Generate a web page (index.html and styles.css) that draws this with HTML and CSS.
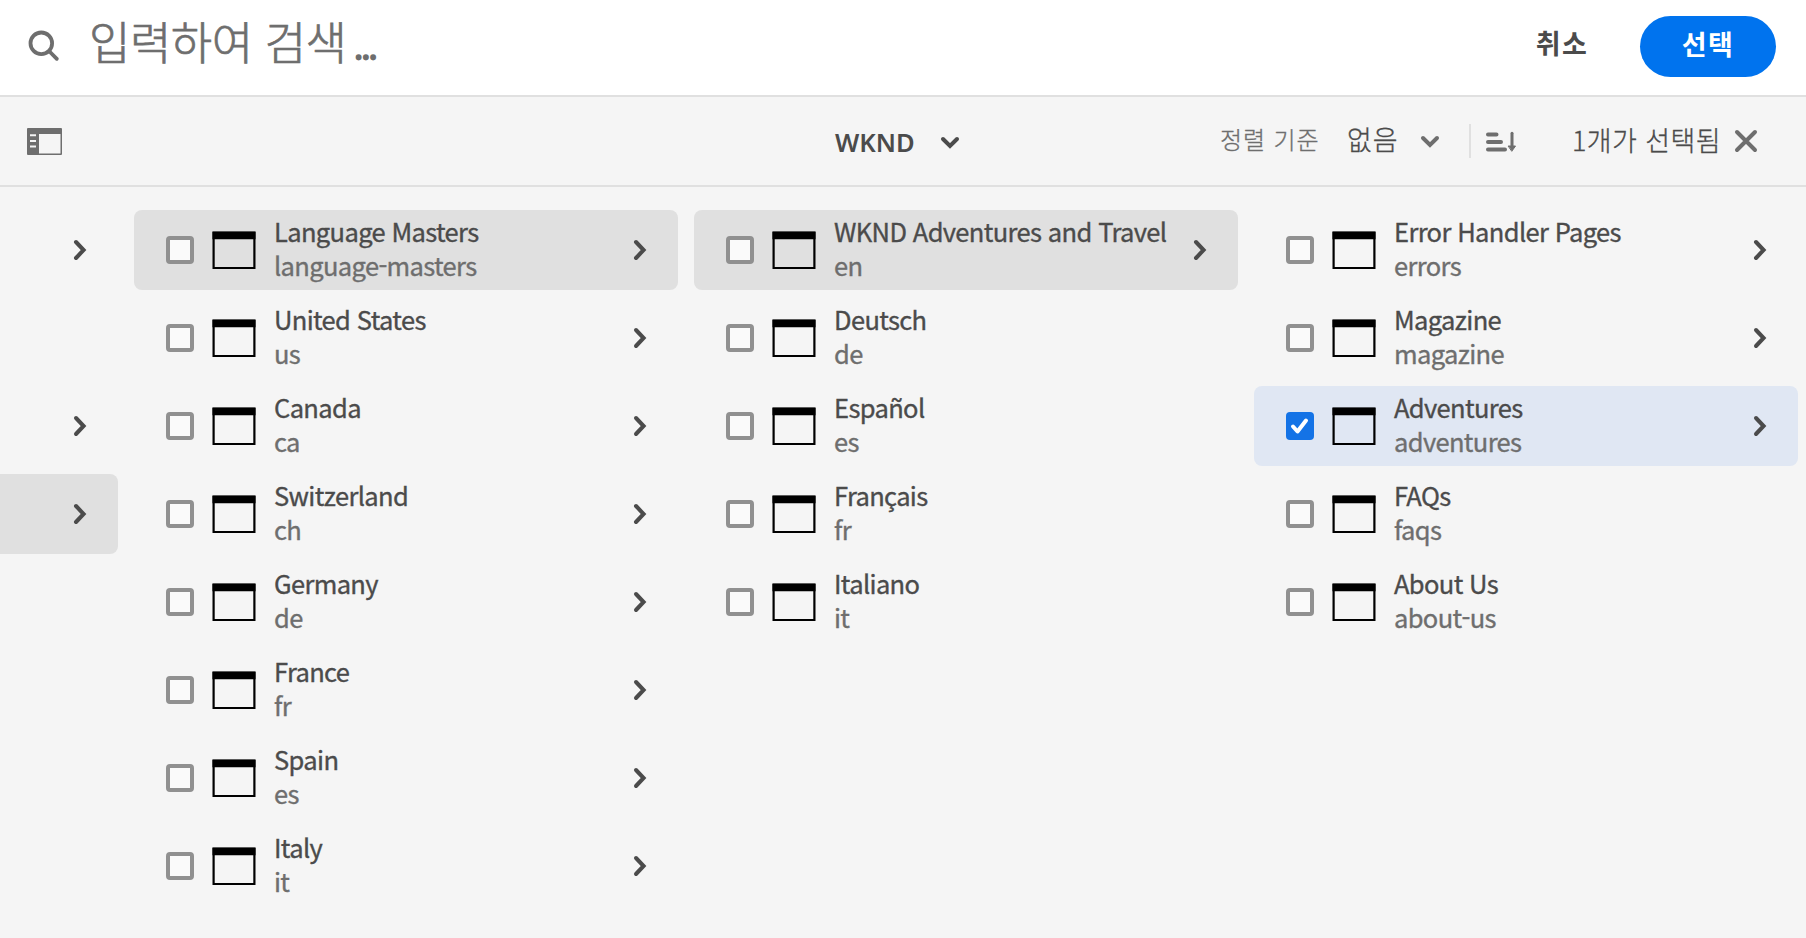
FILE: index.html
```html
<!DOCTYPE html>
<html lang="ko">
<head>
<meta charset="utf-8">
<title>WKND</title>
<link rel="stylesheet" href="styles.css">
</head>
<body>
<svg class="defs" width="0" height="0" aria-hidden="true">
  <symbol id="chev" viewBox="0 0 14 22"><path d="M3 3l7.600 8L3 19" fill="none" stroke="currentColor" stroke-width="4" stroke-linecap="round" stroke-linejoin="miter"/></symbol>
  <symbol id="page" viewBox="0 0 44 38"><path d="M1.600 1.800h40.800v35.200H1.600z" fill="none" stroke="#000" stroke-width="2.200"/><path d="M.5.500h43v7.700H.5z"/></symbol>
  <symbol id="down" viewBox="0 0 20 14"><path d="M3 3l7 7 7-7" fill="none" stroke="currentColor" stroke-width="4" stroke-linecap="round"/></symbol>
</svg>
<header class="search">
  <svg class="search-icon" viewBox="0 0 32 32"><circle cx="13.300" cy="13.300" r="10.800"/><path d="M21.500 21.500l7.300 7.300"/></svg>
  <span class="placeholder">입력하여 검색</span>
  <span class="dots">...</span>
  <button class="cancel">취소</button>
  <button class="select">선택</button>
</header>
<nav class="toolbar">
  <svg class="rail" viewBox="0 0 36 28"><path fill-rule="evenodd" d="M1 0h33q1 0 1 1v25q0 1-1 1H1q-1 0-1-1V1q0-1 1-1zM12 6v19.500h21.500V6zM3 6.200v2h6v-2zM3 12v2h6v-2zM3 17.500v2h6v-2z"/></svg>
  <div class="crumb"><span class="wknd">WKND</span><svg class="down dark"><use href="#down"/></svg></div>
  <span class="sort-label">정렬 기준</span>
  <span class="sort-value">없음</span>
  <svg class="down"><use href="#down"/></svg>
  <i class="divider"></i>
  <svg class="sort" viewBox="0 0 32 22"><path d="M2 3.500h8.500M2 11h13M2 18.500h17" stroke-width="4"/><path d="M26 2.200v14" stroke-width="3"/><path class="tip" d="M22.500 15h7L26 20z"/></svg>
  <span class="count">1개가 선택됨</span>
  <svg class="close" viewBox="0 0 24 24"><path d="M3 3l18 18M21 3L3 21"/></svg>
</nav>
<main class="columns" id="columns"></main>
<script src="app.js"></script>
</body>
</html>
```
FILE: styles.css
```css
* { box-sizing: border-box; }
body { margin: 0; width: 1806px; height: 938px; overflow: hidden; background: #f5f5f5; color: #4b4b4b; font-family: "Noto Sans CJK KR", "Noto Sans", sans-serif; }
svg { display: block; flex: none; overflow: visible; }
.defs { position: absolute; }
span, button { white-space: nowrap; }
.search { height: 97px; background: #fff; border-bottom: 2px solid #e0e0e0; display: flex; align-items: flex-start; padding: 0 30px 0 28px; color: #6e6e6e; }
.search-icon { width: 32px; height: 32px; margin-top: 30px; fill: none; stroke: #6e6e6e; stroke-width: 3.800; stroke-linecap: round; }
.placeholder { margin-left: 29px; width: 260px; font-size: 45px; font-weight: 300; letter-spacing: -.5px; line-height: 60px; margin-top: 11px; -webkit-text-stroke: .7px; }
.dots { font-size: 33px; line-height: 40px; margin: 26px 0 0 5px; letter-spacing: -1.900px; -webkit-text-stroke: 1.500px; }
button { border: 0; background: none; font-family: inherit; font-size: 27px; font-weight: 700; padding: 0; letter-spacing: 1.400px; }
.cancel { margin-left: auto; width: 54px; height: 60px; margin-top: 13px; line-height: 60px; color: #4b4b4b; }
.select { width: 136px; height: 61px; margin: 16px 0 0 51px; padding-bottom: 7px; border-radius: 31px; background: #0073ee; color: #fff; }
.toolbar { height: 90px; border-bottom: 2px solid #e0e0e0; display: flex; align-items: center; padding: 0 48px 0 27px; color: #6e6e6e; }
.rail { width: 36px; height: 28px; margin-top: 2px; fill: #6e6e6e; }
.crumb { display: flex; align-items: center; margin-left: 772px; color: #4b4b4b; gap: 25px; }
.wknd { width: 80px; font-family: "Noto Sans", sans-serif; font-size: 25.500px; font-weight: 600; line-height: 36px; padding-top: 2px; }
.down { width: 20px; height: 14px; }
.crumb .down { margin-top: 3px; }
.sort-label { margin-left: auto; width: 101px; font-size: 24px; font-weight: 300; letter-spacing: .9px; line-height: 36px; padding-bottom: 4px; -webkit-text-stroke: .3px; }
.sort-value { margin: 0 19px 0 26px; width: 54px; font-size: 27px; font-weight: 300; letter-spacing: 1px; line-height: 36px; padding-bottom: 4px; color: #4b4b4b; -webkit-text-stroke: .3px; }
.sort-value + .down { margin-top: 1px; }
.divider { width: 2px; height: 34px; background: #e0e0e0; margin: 0 15px 0 29px; }
.sort { width: 32px; height: 22px; margin-top: 2px; fill: none; stroke: #6e6e6e; }
.sort path { stroke-linecap: round; }
.sort .tip { fill: #6e6e6e; stroke-width: 1; }
.count { margin-left: 54px; width: 150px; font-size: 27px; font-weight: 300; letter-spacing: .4px; line-height: 36px; padding-bottom: 2px; color: #4b4b4b; -webkit-text-stroke: .3px; }
.close { width: 24px; height: 24px; margin-left: 12px; fill: none; stroke: #6e6e6e; stroke-width: 4; stroke-linecap: round; }
.columns { display: grid; grid-template-columns: 118px 544px 544px 544px; column-gap: 16px; padding-top: 23px; }
.column { display: flex; flex-direction: column; gap: 8px; }
.row { height: 80px; border-radius: 8px; display: flex; align-items: center; padding: 0 31px 0 32px; }
.row.open { background: #e0e0e0; }
.row.chosen { background: #e0e7f3; }
.column:first-child .row.open { border-radius: 0 8px 8px 0; }
.check { width: 28px; height: 28px; border: 4px solid #909090; border-radius: 4px; background: #fafafa; flex: none; }
.chosen .check { border: 0; background: #1473e6; padding: 4px; }
.check svg { width: 20px; height: 20px; fill: none; stroke: #fff; stroke-width: 4; stroke-linecap: round; stroke-linejoin: round; }
.page { width: 44px; height: 38px; margin: 0 18px; }
.text { display: flex; flex-direction: column; font-size: 25.500px; letter-spacing: -.64px; line-height: 34px; padding-bottom: 4px; -webkit-text-stroke: .35px; }
.sub { color: #6e6e6e; }
.chev { width: 14px; height: 22px; margin-left: auto; color: #4b4b4b; }
```
FILE: app.js
```js
const columns = [
  [['', '', 1], [], ['', '', 1], ['', '', 1, 'open']],
  [['Language Masters', 'language-masters', 1, 'open'], ['United States', 'us', 1], ['Canada', 'ca', 1], ['Switzerland', 'ch', 1], ['Germany', 'de', 1], ['France', 'fr', 1], ['Spain', 'es', 1], ['Italy', 'it', 1]],
  [['WKND Adventures and Travel', 'en', 1, 'open'], ['Deutsch', 'de'], ['Español', 'es'], ['Français', 'fr'], ['Italiano', 'it']],
  [['Error Handler Pages', 'errors', 1], ['Magazine', 'magazine', 1], ['Adventures', 'adventures', 1, 'chosen'], ['FAQs', 'faqs'], ['About Us', 'about-us']]
];
const item = ([title, name, arrow, state]) => `<div class="row ${state || ''}">` +
  (title ? `<span class="check">${state === 'chosen' ? '<svg viewBox="0 0 20 20"><path d="M3 10.500l4.500 5L16 4.500"/></svg>' : ''}</span>
  <svg class="page"><use href="#page"/></svg>
  <span class="text"><span>${title}</span><span class="sub">${name}</span></span>` : '') +
  (arrow ? '<svg class="chev"><use href="#chev"/></svg>' : '') + '</div>';
document.getElementById('columns').innerHTML = columns.map(c => `<section class="column">${c.map(item).join('')}</section>`).join('');
```
